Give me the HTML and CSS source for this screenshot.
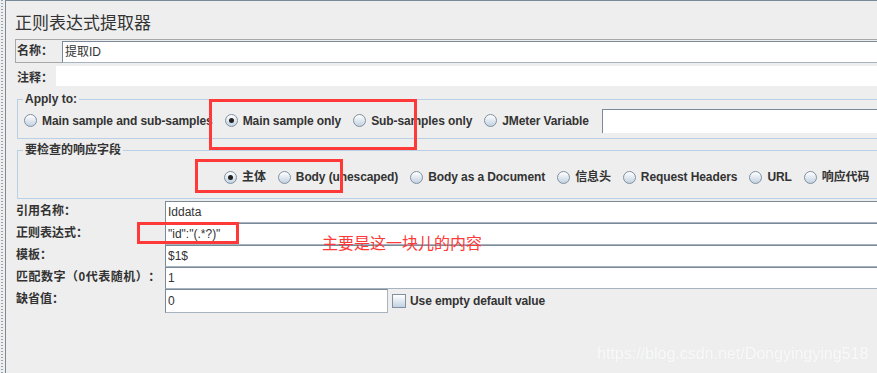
FILE: index.html
```html
<!DOCTYPE html>
<html lang="zh-CN">
<head>
    <meta charset="UTF-8">
    <title>正则表达式提取器</title>
    <link rel="stylesheet" href="styles.css">
</head>
<body>
    <div class="page">
        <div class="gutter"></div>
        <div class="panel">
            <h1 class="title">正则表达式提取器</h1>

            <div class="name-box">
                <span class="name-label">名称：</span>
                <div class="field name-field">提取ID</div>
            </div>
            <div class="comment-row">
                <span class="comment-label">注释：</span>
                <div class="comment-field"></div>
            </div>

            <fieldset class="group apply">
                <legend>Apply to:</legend>
                <div class="radio-row">
                    <span class="radio"><i class="dot"></i>Main sample and sub-samples</span>
                    <span class="radio"><i class="dot on"></i>Main sample only</span>
                    <span class="radio"><i class="dot"></i>Sub-samples only</span>
                    <span class="radio"><i class="dot"></i>JMeter Variable</span>
                    <div class="var-field"></div>
                </div>
            </fieldset>

            <fieldset class="group fields">
                <legend>要检查的响应字段</legend>
                <div class="radio-row">
                    <span class="radio"><i class="dot on"></i>主体</span>
                    <span class="radio"><i class="dot"></i>Body (unescaped)</span>
                    <span class="radio"><i class="dot"></i>Body as a Document</span>
                    <span class="radio"><i class="dot"></i>信息头</span>
                    <span class="radio"><i class="dot"></i>Request Headers</span>
                    <span class="radio"><i class="dot"></i>URL</span>
                    <span class="radio"><i class="dot"></i>响应代码</span>
                </div>
            </fieldset>

            <div class="form">
                <span class="label">引用名称：</span>
                <div class="field">Iddata</div>
                <span class="label">正则表达式：</span>
                <div class="field">"id":"(.*?)"</div>
                <span class="label">模板：</span>
                <div class="field">$1$</div>
                <span class="label wide">匹配数字（0代表随机）：</span>
                <div class="field">1</div>
                <span class="label">缺省值：</span>
                <div class="default-row">
                    <div class="field short">0</div>
                    <span class="check"><i class="box"></i>Use empty default value</span>
                </div>
            </div>
        </div>

        <div class="mark mark-apply"></div>
        <div class="mark mark-body"></div>
        <div class="mark mark-regex"></div>
        <div class="note">主要是这一块儿的内容</div>
        <div class="watermark">https://blog.csdn.net/Dongyingying518</div>
    </div>
</body>
</html>
```

FILE: styles.css
```css
body { margin: 0; background: #eeeeee; font-family: "Liberation Sans", "Noto Sans CJK SC", sans-serif; color: #333333; overflow: hidden; text-spacing-trim: space-all; }
.page { position: relative; display: flex; width: 877px; height: 373px; overflow: hidden; }
.gutter { width: 5px; flex: none; background-image: repeating-linear-gradient(to bottom, #9aa3ad 0 1px, transparent 1px 3px); background-size: 2px 100%; background-repeat: no-repeat; background-position: 1px 0; }
.panel { flex: 1; min-width: 0; border-left: 1px solid #7a8a99; border-top: 1px solid #7a8a99; padding-left: 9px; overflow: hidden; }

.title { margin: 0; padding: 11px 0 3px; font-size: 17px; line-height: 24px; font-weight: normal; color: #333; }

.name-box { display: flex; height: 22px; border: 1px solid #a8a8a8; border-right: none; }
.name-label { width: 45px; padding-left: 1px; font-size: 12px; font-weight: bold; line-height: 22px; }
.name-field { flex: 1; height: 20px; margin-top: 1px; border-bottom: none; }

.comment-row { display: flex; height: 25px; padding-top: 2px; }
.comment-label { width: 39px; padding-left: 2px; font-size: 12px; font-weight: bold; line-height: 22px; padding-top: 2px; }
.comment-field { flex: 1; height: 20px; margin-top: 1px; background: #fff; }

.group { margin: 0 -30px 0 2px; padding: 0 0 0 6px; border: 1px solid #b8cfe5; }
.group legend { padding: 0 2px; margin-left: -1px; font-size: 12px; font-weight: bold; line-height: 14px; }
.apply { margin-top: 2px; padding-top: 2px; padding-bottom: 5px; }
.fields { margin-top: 4px; padding-top: 10px; padding-bottom: 11px; }

.radio-row { display: flex; align-items: center; white-space: nowrap; }
.apply .radio-row { height: 25px; }
.fields .radio-row { height: 20px; padding-left: 200px; }
.radio { display: flex; align-items: center; margin-right: 12px; font-size: 12px; font-weight: bold; line-height: 16px; letter-spacing: -0.1px; }
.dot { position: relative; width: 11px; height: 11px; margin-right: 5px; border: 1px solid #7f90a1; border-radius: 50%; background: linear-gradient(#ffffff, #c3d2e1); flex: none; }
.dot.on::after { content: ""; position: absolute; left: 3px; top: 3px; width: 5px; height: 5px; border-radius: 50%; background: #222; }
.var-field { flex: 1; min-width: 300px; height: 23px; margin-left: 1px; background: #fff; border-top: 1px solid #7a8a99; border-left: 1px solid #7a8a99; }

.form { display: grid; grid-template-columns: 150px 1fr; grid-auto-rows: 22px; margin-top: 2px; }
.label { padding-left: 1px; font-size: 12px; font-weight: bold; line-height: 20px; white-space: nowrap; }
.label.wide { letter-spacing: 0.5px; }
.field { box-sizing: border-box; height: 22px; padding-left: 2px; background: #fff; border-top: 1px solid #7a8a99; border-left: 1px solid #7a8a99; border-bottom: 1px solid #a7b3bf; font-size: 12px; line-height: 20px; white-space: nowrap; }
.default-row { display: flex; align-items: center; height: 24px; }
.field.short { width: 223px; height: 24px; line-height: 22px; border-right: 1px solid #a7b3bf; }
.check { display: flex; align-items: center; margin-left: 4px; font-size: 12px; font-weight: bold; letter-spacing: -0.1px; }
.box { width: 12px; height: 12px; margin-right: 4px; border: 1px solid #7f90a1; background: linear-gradient(#ffffff, #c3d2e1); }

.mark { position: absolute; border: 3px solid #ff3838; }
.mark-apply { left: 209px; top: 99px; width: 202px; height: 45px; }
.mark-body { left: 195px; top: 159px; width: 142px; height: 28px; }
.mark-regex { left: 137px; top: 222px; width: 96px; height: 16px; }
.note { position: absolute; left: 322px; top: 234px; font-size: 16px; line-height: 20px; color: #ff3838; }
.watermark { position: absolute; left: 597px; top: 344px; font-size: 16px; line-height: 20px; color: #fafafa; text-shadow: 0 0 1px #e4e4e4; }
```
